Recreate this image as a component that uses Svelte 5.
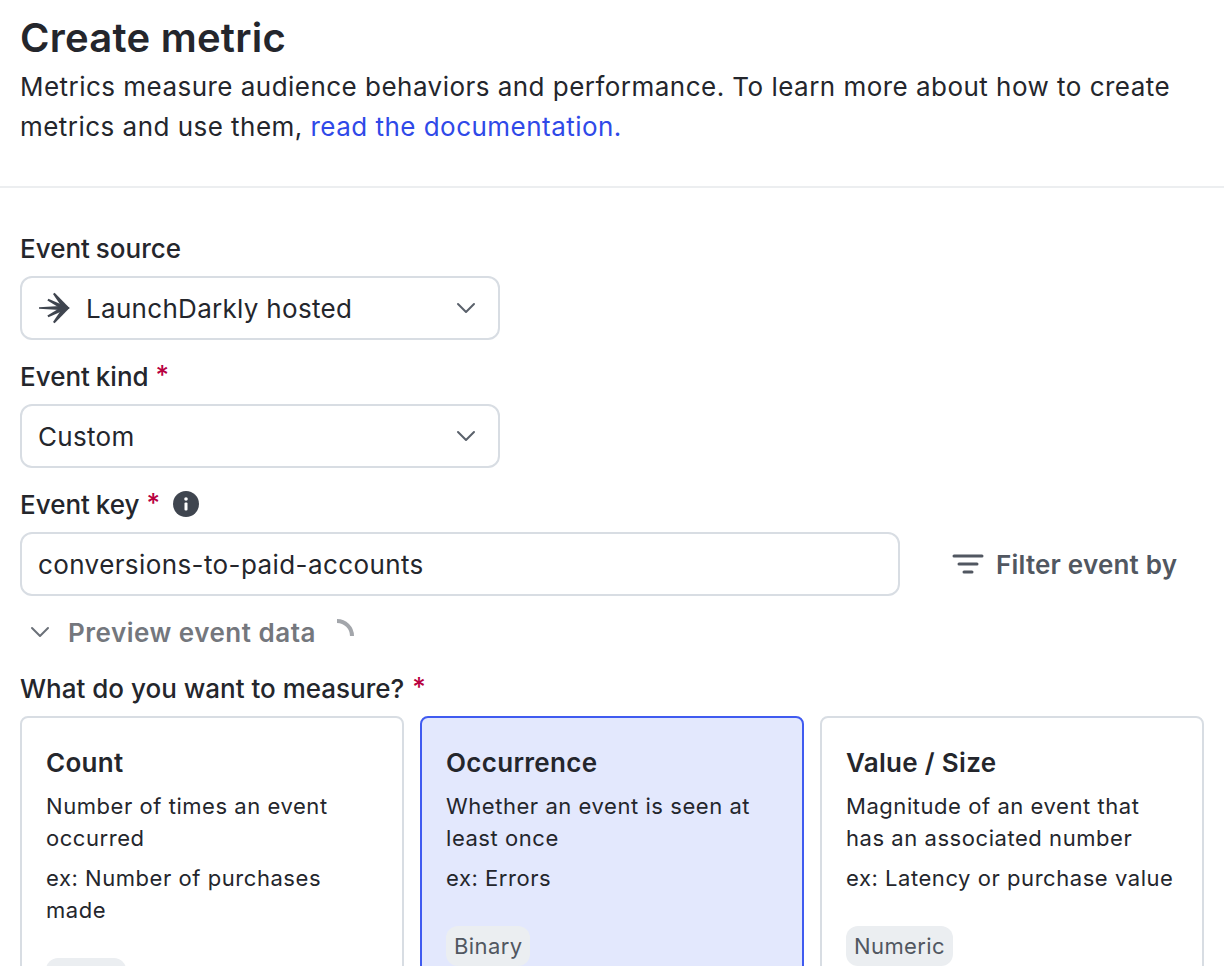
<script>
    const cards = [
        { title: 'Count', desc: 'Number of times an event occurred', ex: 'ex: Number of purchases made', tag: 'Count' },
        { title: 'Occurrence', desc: 'Whether an event is seen at least once', ex: 'ex: Errors', tag: 'Binary', selected: true },
        { title: 'Value / Size', desc: 'Magnitude of an event that has an associated number', ex: 'ex: Latency or purchase value', tag: 'Numeric' }
    ];
</script>

<main class="page">
    <header class="intro">
        <h1>Create metric</h1>
        <p>Metrics measure audience behaviors and performance. To learn more about how to create metrics and use them, <a href="#docs">read the documentation.</a></p>
    </header>

    <form class="form">
        <div class="field">
            <div class="label">Event source</div>
            <div class="select">
                <svg class="source-icon" width="32" height="32" viewBox="0 0 32 32" fill="#3f454f">
                    <path d="M1 15.2L22 14L31.5 16L22 18L1 16.8Z" />
                    <path d="M15 2L16.6 .8L31.5 16L26.5 19Z" />
                    <path d="M15 30L16.6 31.2L31.5 16L26.5 13Z" />
                    <path d="M9.4 8.4L10.4 6.8L31.5 16L26 18.4Z" />
                    <path d="M9.4 23.6L10.4 25.2L31.5 16L26 13.6Z" />
                </svg>
                <span>LaunchDarkly hosted</span>
                <svg class="chevron" width="20" height="12" viewBox="0 0 20 12" fill="none" stroke="#5a616b" stroke-width="2" stroke-linecap="round" stroke-linejoin="round"><path d="M2 2L10 10L18 2" /></svg>
            </div>
        </div>

        <div class="field">
            <div class="label">Event kind <span class="req">*</span></div>
            <div class="select">
                <span>Custom</span>
                <svg class="chevron" width="20" height="12" viewBox="0 0 20 12" fill="none" stroke="#5a616b" stroke-width="2" stroke-linecap="round" stroke-linejoin="round"><path d="M2 2L10 10L18 2" /></svg>
            </div>
        </div>

        <div class="field">
            <div class="label">Event key <span class="req">*</span>
                <svg class="info" width="28" height="28" viewBox="0 0 28 28"><circle cx="14" cy="14" r="13" fill="#3f454f" /><circle cx="14" cy="9" r="1.8" fill="#fff" /><rect x="12.5" y="12.5" width="3" height="8" rx="1" fill="#fff" /></svg>
            </div>
            <div class="key-row">
                <div class="input">conversions-to-paid-accounts</div>
                <button type="button" class="filter">
                    <svg width="32" height="22" viewBox="0 0 32 22" fill="none" stroke="#515761" stroke-width="3" stroke-linecap="round"><path d="M2 3H30" /><path d="M7 11H25" /><path d="M12 19H20" /></svg>
                    Filter event by
                </button>
            </div>
        </div>

        <div class="preview">
            <svg width="20" height="12" viewBox="0 0 20 12" fill="none" stroke="#6b7078" stroke-width="2" stroke-linecap="round" stroke-linejoin="round"><path d="M2 2L10 10L18 2" /></svg>
            <span>Preview event data</span>
            <svg class="spinner" width="20" height="22" viewBox="0 0 20 22" fill="none" stroke="#a3a6ab" stroke-width="4"><path d="M1 3A15 15 0 0 1 16 18" /></svg>
        </div>

        <div class="field measure">
            <div class="label">What do you want to measure? <span class="req">*</span></div>
            <div class="cards">
                {#each cards as card}
                    <div class="card" class:selected={card.selected}>
                        <h2>{card.title}</h2>
                        <p>{card.desc}</p>
                        <p>{card.ex}</p>
                        <span class="tag">{card.tag}</span>
                    </div>
                {/each}
            </div>
        </div>
    </form>
</main>

<style>
    :global(body) {
        margin: 0;
        background: #fff;
    }

    .page {
        height: 966px;
        overflow: hidden;
        font-family: Inter, "Liberation Sans", sans-serif;
        color: #24262c;
    }

    .intro {
        padding: 12px 20px 39px;
        border-bottom: 2px solid #eceef0;
    }

    h1 {
        margin: 0;
        font-size: 40px;
        line-height: 52px;
        font-weight: 600;
        letter-spacing: 0.25px;
    }

    .intro p {
        margin: 3px 0 0;
        font-size: 26px;
        line-height: 40px;
        letter-spacing: 0.47px;
    }

    a {
        color: #2f49e8;
        text-decoration: none;
    }

    .form {
        padding: 40px 20px 0;
    }

    .field {
        margin-bottom: 16px;
    }

    .label {
        display: flex;
        align-items: center;
        height: 40px;
        margin-bottom: 8px;
        font-size: 26px;
        font-weight: 500;
        word-spacing: -1px;
        white-space: pre;
    }

    .measure .label {
        word-spacing: 0;
    }

    .req {
        position: relative;
        top: -2px;
        margin-left: 1px;
        margin-right: 12px;
        color: #b8003f;
    }

    .select,
    .input {
        box-sizing: border-box;
        display: flex;
        align-items: center;
        height: 64px;
        border: 2px solid #d8dde3;
        border-radius: 12px;
        padding: 0 16px;
        font-size: 26px;
        letter-spacing: 0.3px;
        background: #fff;
    }

    .select {
        width: 480px;
    }

    .source-icon {
        margin-right: 16px;
    }

    .chevron {
        margin-left: auto;
        margin-right: 6px;
    }

    .key-row {
        display: flex;
        align-items: center;
    }

    .input {
        width: 880px;
        letter-spacing: 0.4px;
    }

    .filter {
        display: flex;
        align-items: center;
        gap: 12px;
        margin-left: 52px;
        padding: 0;
        border: 0;
        background: none;
        font: inherit;
        font-size: 26px;
        font-weight: 600;
        letter-spacing: 0.2px;
        color: #515761;
    }

    .preview {
        display: flex;
        align-items: center;
        height: 40px;
        padding-left: 10px;
        margin-bottom: 16px;
        font-size: 26px;
        font-weight: 600;
        letter-spacing: 0.5px;
        color: #74777d;
    }

    .preview span {
        margin-left: 18px;
        margin-right: 20px;
    }

    .spinner {
        margin-bottom: 6px;
    }

    .cards {
        display: grid;
        grid-template-columns: repeat(3, 384px);
        gap: 16px;
    }

    .card {
        box-sizing: border-box;
        height: 400px;
        padding: 24px;
        border: 2px solid #d8dde3;
        border-radius: 8px;
        background: #fff;
    }

    .card.selected {
        border-color: #405bf0;
        background: #e3e8fd;
    }

    h2 {
        margin: 0 0 6px;
        font-size: 26px;
        line-height: 42px;
        font-weight: 600;
        letter-spacing: 0.3px;
    }

    .card p {
        margin: 0 0 8px;
        font-size: 22px;
        line-height: 32px;
        letter-spacing: 0.55px;
    }

    .tag {
        display: inline-block;
        margin-top: 24px;
        padding: 0 8px;
        height: 40px;
        line-height: 40px;
        border-radius: 12px;
        background: #ebeef1;
        font-size: 22px;
        letter-spacing: 0.4px;
        color: #515761;
    }
</style>
